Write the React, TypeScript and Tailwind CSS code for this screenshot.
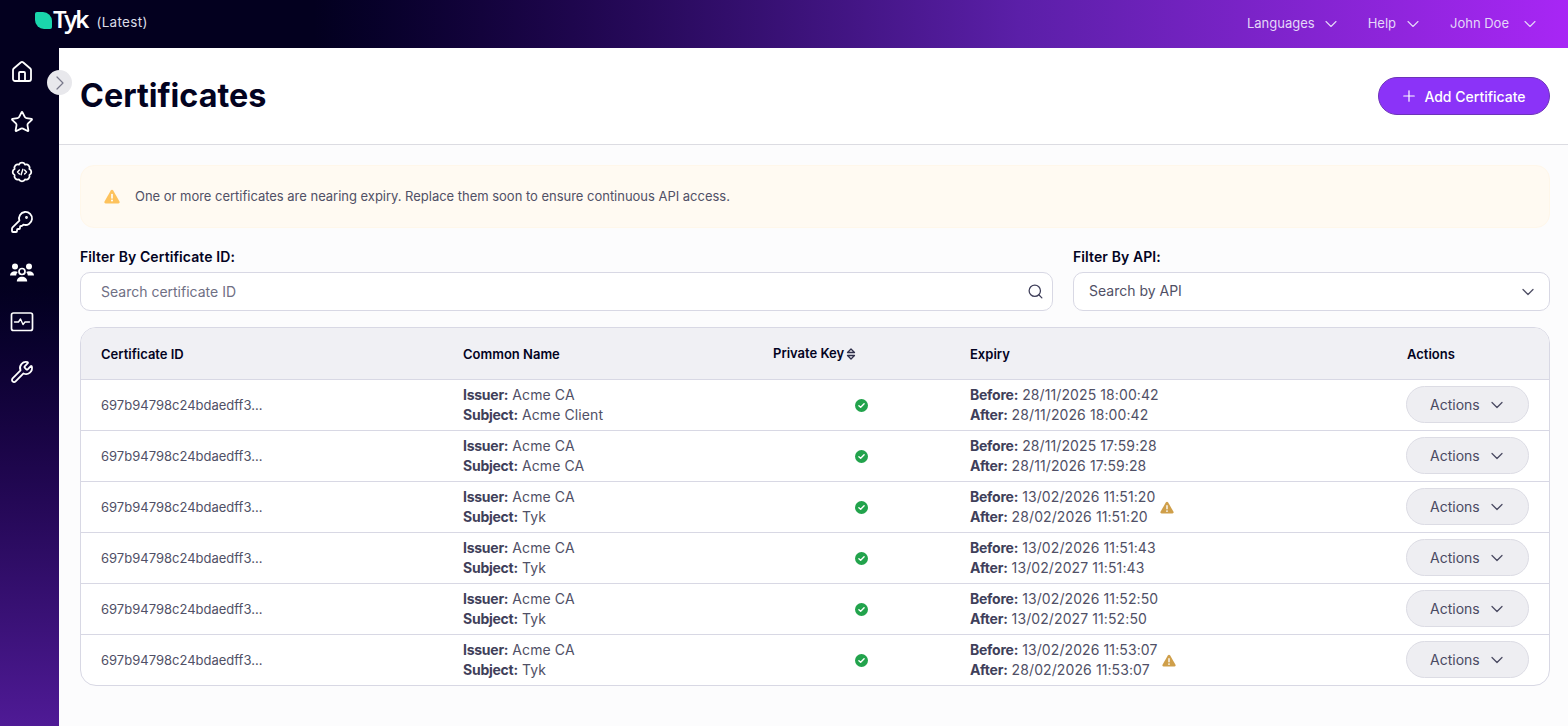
import { ChevronDown, ChevronRight, Plus, Search, House, Star, KeyRound, Wrench } from "lucide-react";

interface Row {
  issuer: string;
  subject: string;
  before: string;
  after: string;
  warn?: boolean;
}

const rows: Row[] = [
  { issuer: "Acme CA", subject: "Acme Client", before: "28/11/2025 18:00:42", after: "28/11/2026 18:00:42" },
  { issuer: "Acme CA", subject: "Acme CA", before: "28/11/2025 17:59:28", after: "28/11/2026 17:59:28" },
  { issuer: "Acme CA", subject: "Tyk", before: "13/02/2026 11:51:20", after: "28/02/2026 11:51:20", warn: true },
  { issuer: "Acme CA", subject: "Tyk", before: "13/02/2026 11:51:43", after: "13/02/2027 11:51:43" },
  { issuer: "Acme CA", subject: "Tyk", before: "13/02/2026 11:52:50", after: "13/02/2027 11:52:50" },
  { issuer: "Acme CA", subject: "Tyk", before: "13/02/2026 11:53:07", after: "28/02/2026 11:53:07", warn: true },
];

const WarnIcon = ({ className }: { className: string }) => (
  <svg viewBox="0 0 16 15" className={className}>
    <path d="M8 .8c.5 0 .9.3 1.200.7l6.300 10.900c.5.900-.1 2-1.200 2H1.700c-1.100 0-1.700-1.100-1.200-2L6.800 1.500C7.100 1.100 7.500.8 8 .8z" fill="currentColor" />
    <rect x="7.200" y="4.700" width="1.600" height="5" rx=".8" fill="#fff" />
    <circle cx="8" cy="11.600" r="1" fill="#fff" />
  </svg>
);

const CheckIcon = () => (
  <svg viewBox="0 0 14 14" className="w-[13px] h-[13px]">
    <circle cx="7" cy="7" r="7" fill="#22a34c" />
    <path d="M4.200 7.200l1.900 1.800 3.700-3.800" fill="none" stroke="#fff" strokeWidth="1.500" strokeLinecap="round" strokeLinejoin="round" />
  </svg>
);

const ApiIcon = () => (
  <svg viewBox="0 0 24 24" className="w-[24px] h-[24px]" fill="none" stroke="currentColor" strokeWidth="1.800" strokeLinecap="round" strokeLinejoin="round">
    <path d="M19.400 8.940A3.400 3.400 0 0 1 19.400 15.060A3.400 3.400 0 0 1 15.060 19.400A3.400 3.400 0 0 1 8.940 19.400A3.400 3.400 0 0 1 4.600 15.060A3.400 3.400 0 0 1 4.600 8.940A3.400 3.400 0 0 1 8.940 4.600A3.400 3.400 0 0 1 15.060 4.600A3.400 3.400 0 0 1 19.400 8.940z" />
    <path d="M9.400 10L7.500 12l1.900 2M14.600 10l1.900 2-1.900 2M12.900 9.300l-1.800 5.400" strokeWidth="1.400" />
  </svg>
);

const UsersIcon = () => (
  <svg viewBox="0 0 26 24" className="w-[28px] h-[24px]" fill="currentColor">
    <circle cx="6" cy="6.500" r="3" />
    <circle cx="20" cy="6.500" r="3" />
    <path d="M1 15.500c0-2.500 2-4.200 5-4.200 1.100 0 2 .2 2.800.6-.9.900-1.500 2.200-1.600 3.600z" />
    <path d="M25 15.500c0-2.500-2-4.200-5-4.200-1.100 0-2 .2-2.800.6.900.9 1.500 2.200 1.600 3.600z" />
    <circle cx="13" cy="11.500" r="3" fill="none" stroke="currentColor" strokeWidth="1.700" />
    <path d="M7.800 21.500c0-2.900 2.300-4.700 5.200-4.700s5.200 1.800 5.200 4.700z" />
  </svg>
);

const MonitorIcon = () => (
  <svg viewBox="0 0 24 24" className="w-[24px] h-[24px]" fill="none" stroke="currentColor" strokeWidth="1.700" strokeLinecap="round" strokeLinejoin="round">
    <rect x="1.500" y="3" width="21" height="17.500" rx="2" />
    <path d="M4.500 12h4l2-3 2.500 5.500 2-2.500h4.500" strokeWidth="1.400" />
  </svg>
);

const Logo = () => (
  <div className="flex items-start">
    <div className="w-[17px] h-[17px] bg-[#1ad6ac] rounded-tl-[2px] rounded-tr-[9px] rounded-bl-[9px] rounded-br-[2px] mt-[15px]" />
    <span className="text-[24px] leading-[30px] font-semibold text-white tracking-[-2px] font-['Noto_Sans',sans-serif] mt-[7px] ml-[1px]">Tyk</span>
  </div>
);

const NavItem = ({ label, className }: { label: string; className: string }) => (
  <div className={`flex items-center text-[13px] text-[#e4d8f8] ${className}`}>
    <span>{label}</span>
    <ChevronDown className="w-[20px] h-[20px]" strokeWidth={1.300} />
  </div>
);

const CertRow = ({ row }: { row: Row }) => (
  <div className="grid grid-cols-[382px_310px_197px_437px_1fr] items-center h-[51px] border-t border-[#d8d8e4] text-[14px] leading-[20px] tracking-[.1px] text-[#505066]">
    <div className="pl-[20px] text-[13px] tracking-normal">697b94798c24bdaedff3...</div>
    <div>
      <div><b className="font-bold tracking-[-.25px] text-[#3f3f5a]">Issuer:</b> {row.issuer}</div>
      <div><b className="font-bold tracking-[-.25px] text-[#3f3f5a]">Subject:</b> {row.subject}</div>
    </div>
    <div className="pl-[82px] flex">
      <CheckIcon />
    </div>
    <div className="flex items-center">
      <div>
        <div><b className="font-bold tracking-[-.25px] text-[#3f3f5a]">Before:</b> {row.before}</div>
        <div><b className="font-bold tracking-[-.25px] text-[#3f3f5a]">After:</b> {row.after}</div>
      </div>
      {row.warn && <WarnIcon className="w-[14px] h-[13px] text-[#cf9f4a] ml-[5px]" />}
    </div>
    <div>
      <button className="flex items-center gap-[7px] pl-[23px] pt-[1px] -ml-[1px] -mt-[2px] w-[123px] h-[37px] rounded-full bg-[#eeeef2] border border-[#dcdce4] text-[14px] tracking-normal text-[#4a4a62]">
        Actions
        <ChevronDown className="w-[20px] h-[20px]" strokeWidth={1.500} />
      </button>
    </div>
  </div>
);

export default function App() {
  return (
    <div className="font-['Inter',sans-serif] h-[726px] w-[1568px] overflow-hidden flex flex-col bg-[#fcfcfd]">
      <header className="h-[48px] shrink-0 flex items-start justify-between pl-[35px] pr-[28px] bg-gradient-to-r from-[#03001f] from-20% via-[#5b1fa8] via-65% to-[#a826f5] to-100%">
        <div className="flex items-start -mt-[3px]">
          <Logo />
          <span className="text-[13.500px] text-[#dcdce6] ml-[9px] mt-[15px] tracking-[.3px]">(Latest)</span>
        </div>
        <div className="flex items-center gap-[27px] h-[48px]">
          <NavItem label="Languages" className="gap-[6px]" />
          <NavItem label="Help" className="gap-[7px]" />
          <NavItem label="John Doe" className="gap-[11px]" />
        </div>
      </header>
      <div className="flex-1 flex min-h-0">
        <aside className="relative w-[59px] shrink-0 flex flex-col items-center pt-[12px] gap-[26px] text-white bg-gradient-to-b from-[#03001f] from-35% to-[#4f1a96] to-100% pr-[15px]">
          <House className="w-[24px] h-[24px]" strokeWidth={1.800} />
          <Star className="w-[24px] h-[24px]" strokeWidth={1.800} />
          <ApiIcon />
          <KeyRound className="w-[24px] h-[24px]" strokeWidth={1.800} />
          <UsersIcon />
          <MonitorIcon />
          <Wrench className="w-[24px] h-[24px]" strokeWidth={1.800} />
          <div className="absolute left-[47px] top-[22px] w-[25px] h-[25px] rounded-full bg-[#e8e8ec] flex items-center justify-center text-[#77778a]">
            <ChevronRight className="w-[24px] h-[24px]" strokeWidth={1.200} />
          </div>
        </aside>
        <main className="flex-1 min-w-0">
          <div className="h-[97px] bg-white border-b border-[#dcdce2] flex items-center justify-between pl-[21px] pr-[18px]">
            <h1 className="text-[32.300px] pt-[1px] font-bold text-[#03031f]">Certificates</h1>
            <button className="flex items-center gap-[6px] h-[38px] w-[172px] justify-center pr-[2px] rounded-full bg-[#8b33f8] border border-[#6d33b8] text-[14px] font-medium text-white">
              <Plus className="w-[18px] h-[18px]" strokeWidth={1.600} />
              Add Certificate
            </button>
          </div>
          <div className="pt-[20px] pl-[21px] pr-[18px]">
            <div className="h-[63px] rounded-[14px] bg-[#fffaf2] border border-[#fff7ea] flex items-center pl-[23px] gap-[15px] text-[13px] tracking-[-.02px] text-[#505066]">
              <WarnIcon className="w-[16px] h-[15px] text-[#fdc25c]" />
              <span className="pt-[1px]">One or more certificates are nearing expiry. Replace them soon to ensure continuous API access.</span>
            </div>
            <div className="flex gap-[20px] mt-[19px]">
              <div className="w-[973px]">
                <label className="block text-[14px] leading-[20px] font-semibold tracking-[.1px] text-[#03031f]">Filter By Certificate ID:</label>
                <div className="mt-[5px] h-[39px] rounded-[10px] bg-white border border-[#d8d8e4] flex items-center justify-between pl-[20px] pr-[8px] text-[14px] text-[#6f6f84]">
                  Search certificate ID
                  <Search className="w-[17px] h-[17px] text-[#3f3f5a]" strokeWidth={1.800} />
                </div>
              </div>
              <div className="flex-1">
                <label className="block text-[14px] leading-[20px] font-semibold tracking-[.1px] text-[#03031f]">Filter By API:</label>
                <div className="mt-[5px] h-[39px] rounded-[10px] bg-white border border-[#d8d8e4] flex items-center justify-between pl-[15px] pr-[11px] text-[14px] text-[#505066]">
                  <span className="pb-[2px]">Search by API</span>
                  <ChevronDown className="w-[20px] h-[20px]" strokeWidth={1.500} />
                </div>
              </div>
            </div>
            <div className="mt-[16px] rounded-[16px] border border-[#d8d8e4] bg-white overflow-hidden">
              <div className="grid grid-cols-[382px_310px_197px_437px_1fr] items-center h-[51px] pt-[2px] bg-[#f0f0f4] text-[13px] font-semibold text-[#03031f]">
                <div className="pl-[20px]">Certificate ID</div>
                <div>Common Name</div>
                <div className="flex items-center gap-[2px] -mt-[2px]">
                  Private Key
                  <svg viewBox="0 0 10 12" className="w-[10px] h-[12px]" fill="none" stroke="#2f2f4a" strokeWidth="1.300" strokeLinejoin="round">
                    <path d="M5 1L1.500 4.500h7zM5 11L1.500 7.500h7z" />
                  </svg>
                </div>
                <div>Expiry</div>
                <div>Actions</div>
              </div>
              {rows.map((row) => (
                <CertRow key={row.before} row={row} />
              ))}
            </div>
          </div>
        </main>
      </div>
    </div>
  );
}
